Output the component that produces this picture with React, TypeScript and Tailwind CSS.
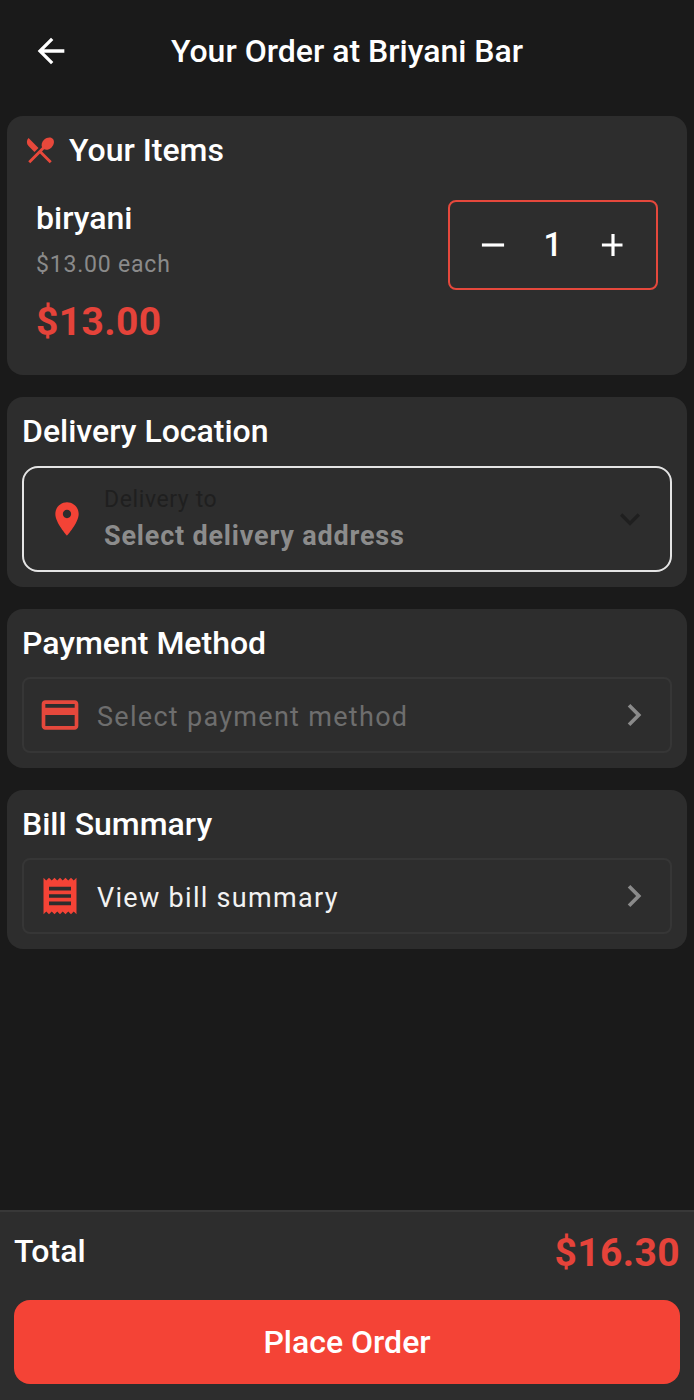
import React from "react";

const P: Record<string, string> = {
  back: "M20 11H7.83l5.59-5.59L12 4l-8 8 8 8 1.41-1.41L7.83 13H20v-2z",
  menu: "M8.1 13.34l2.83-2.83L3.91 3.5c-1.56 1.56-1.56 4.09 0 5.66l4.19 4.18zm6.78-1.81c1.53.71 3.68.21 5.27-1.38 1.91-1.91 2.28-4.65.81-6.12-1.46-1.46-4.2-1.1-6.12.81-1.59 1.59-2.09 3.74-1.38 5.27L3.7 19.87l1.41 1.41L12 14.41l6.88 6.88 1.41-1.41L13.41 13l1.47-1.47z",
  pin: "M12 2C8.13 2 5 5.13 5 9c0 5.25 7 13 7 13s7-7.75 7-13c0-3.87-3.13-7-7-7zm0 9.5c-1.38 0-2.5-1.12-2.5-2.5s1.12-2.5 2.5-2.5 2.5 1.12 2.5 2.5-1.12 2.5-2.5 2.5z",
  card: "M20 4H4c-1.11 0-1.99.89-1.99 2L2 18c0 1.11.89 2 2 2h16c1.11 0 2-.89 2-2V6c0-1.11-.89-2-2-2zm0 14H4v-6h16v6zm0-10H4V6h16v2z",
  receipt: "M18 17H6v-2h12v2zm0-4H6v-2h12v2zm0-4H6V7h12v2zM3 22l1.5-1.5L6 22l1.5-1.5L9 22l1.5-1.5L12 22l1.5-1.5L15 22l1.5-1.5L18 22l1.5-1.5L21 22V2l-1.5 1.5L18 2l-1.5 1.5L15 2l-1.5 1.5L12 2l-1.5 1.5L9 2 7.5 3.5 6 2 4.5 3.5 3 2v20z",
  right: "M10 6L8.59 7.41 13.17 12l-4.58 4.59L10 18l6-6z",
  down: "M16.59 8.59L12 13.17 7.41 8.59 6 10l6 6 6-6z",
  minus: "M19 13H5v-2h14v2z",
  plus: "M19 13h-6v6h-2v-6H5v-2h6V5h2v6h5v2z",
};

function Icon({ name, className }: { name: string; className: string }) {
  return (
    <svg viewBox="0 0 24 24" fill="currentColor" className={className}>
      <path d={P[name]} />
    </svg>
  );
}

function Row({ icon, text, textClass, iconClass }: { icon: string; text: string; textClass: string; iconClass: string }) {
  return (
    <div className="mt-[14px] flex h-[76px] items-center rounded-[8px] border-2 border-[#363636] pl-[14px] pr-[14px]">
      <Icon name={icon} className={`h-[44px] w-[44px] shrink-0 ${iconClass}`} />
      <span className={`ml-[15px] flex-1 pt-[5px] text-[27px] tracking-[1.3px] ${textClass}`}>{text}</span>
      <Icon name="right" className="h-[44px] w-[44px] text-[#8a8a8a]" />
    </div>
  );
}

export default function App() {
  return (
    <div className="flex h-[1400px] w-[694px] flex-col overflow-hidden bg-[#1a1a1a] font-['Roboto',sans-serif] text-white">
      <header className="relative flex h-[116px] shrink-0 items-start justify-center pt-[30px]">
        <Icon name="back" className="absolute left-[31px] top-[31px] h-[40px] w-[40px] text-white" />
        <h1 className="text-[32px] font-medium leading-[42px]">Your Order at Briyani Bar</h1>
      </header>

      <main className="flex flex-1 flex-col gap-[22px] px-[7px]">
        <section className="h-[259px] rounded-[16px] bg-[#2d2d2d] pl-[16px] pr-[29px] pt-[14px]">
          <div className="flex items-center">
            <Icon name="menu" className="h-[34px] w-[34px] text-[#e8483b]" />
            <h2 className="ml-[12px] text-[32px] font-medium leading-[40px]">Your Items</h2>
          </div>
          <div className="mt-[11px] flex items-start justify-between pl-[13px]">
            <div className="pt-[18px]">
              <div className="text-[32px] font-medium leading-[38px]">biryani</div>
              <div className="mt-[13px] text-[23px] leading-[30px] tracking-[0.8px] text-[#8a8a8a]">$13.00 each</div>
              <div className="mt-[16px] text-[39px] font-bold leading-[52px] tracking-[0.4px] text-[#e5433a]">$13.00</div>
            </div>
            <div className="mt-[19px] flex h-[90px] w-[210px] items-center justify-between rounded-[8px] border-2 border-[#e5483c] px-[24px]">
              <Icon name="minus" className="h-[38px] w-[38px] text-white" />
              <span className="text-[33px] font-medium">1</span>
              <Icon name="plus" className="h-[38px] w-[38px] text-white" />
            </div>
          </div>
        </section>

        <section className="h-[190px] rounded-[16px] bg-[#2d2d2d] px-[15px] pt-[14px]">
          <h2 className="text-[32px] font-medium leading-[40px]">Delivery Location</h2>
          <div className="mt-[15px] flex h-[106px] items-center rounded-[16px] border-2 border-[#e4e4e4] pl-[23px] pr-[20px]">
            <Icon name="pin" className="h-[40px] w-[40px] shrink-0 text-[#f44336]" />
            <div className="ml-[17px] flex-1">
              <div className="text-[23px] leading-[30px] tracking-[0.6px] text-[#1f1f1f]">Delivery to</div>
              <div className="mt-[4px] text-[27px] font-bold leading-[34px] tracking-[0.8px] text-[#8c8c8c]">Select delivery address</div>
            </div>
            <Icon name="down" className="h-[40px] w-[40px] text-[#1f1f1f]" />
          </div>
        </section>

        <section className="h-[159px] rounded-[16px] bg-[#2d2d2d] px-[15px] pt-[14px]">
          <h2 className="text-[32px] font-medium leading-[40px]">Payment Method</h2>
          <Row icon="card" iconClass="text-[#e5483c]" text="Select payment method" textClass="text-[#6e6e6e]" />
        </section>

        <section className="h-[159px] rounded-[16px] bg-[#2d2d2d] px-[15px] pt-[14px]">
          <h2 className="text-[32px] font-medium leading-[40px]">Bill Summary</h2>
          <Row icon="receipt" iconClass="text-[#f44336]" text="View bill summary" textClass="text-[#f2f2f2]" />
        </section>
      </main>

      <footer className="h-[190px] shrink-0 border-t-2 border-[#383838] bg-[#2d2d2d] px-[14px]">
        <div className="flex h-[88px] items-center justify-between pb-[7px]">
          <span className="mb-[4px] text-[32px] font-medium">Total</span>
          <span className="mt-[2px] text-[39px] font-bold tracking-[0.4px] text-[#e5433a]">$16.30</span>
        </div>
        <button className="flex h-[84px] w-full items-center justify-center rounded-[16px] bg-[#f44336] text-[32px] font-medium text-white">
          Place Order
        </button>
      </footer>
    </div>
  );
}
